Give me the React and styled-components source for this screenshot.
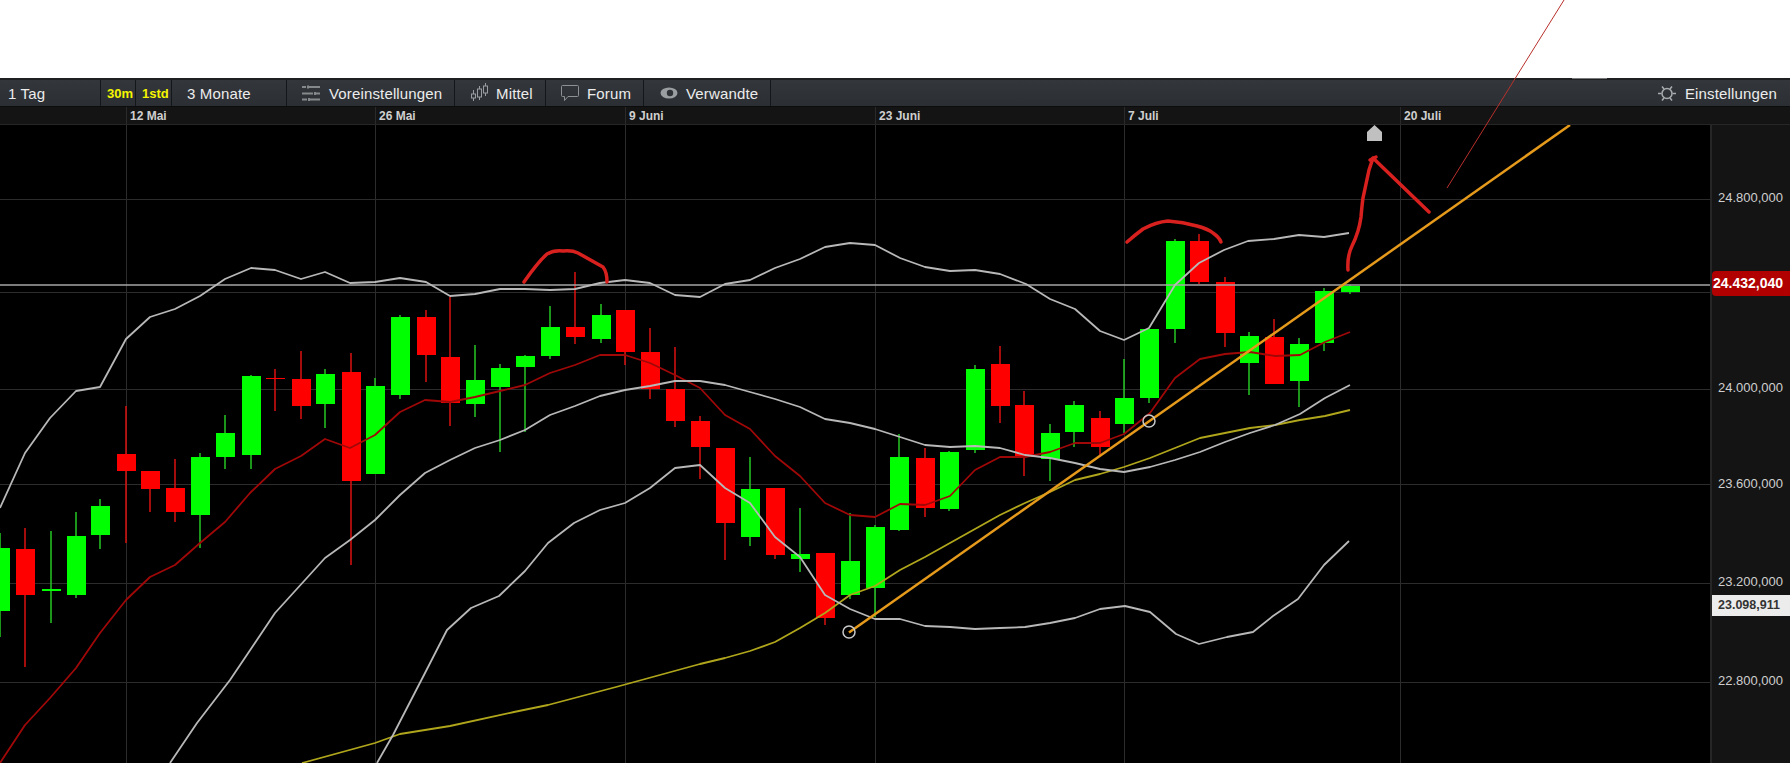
import * as React from 'react'
import styled, { createGlobalStyle } from 'styled-components'

const GlobalStyle = createGlobalStyle`
  html, body {
    margin: 0;
    padding: 0;
    background: #fff;
    overflow: hidden;
  }
`

const Page = styled.div`
  position: relative;
  width: 1790px;
  height: 763px;
  display: flex;
  flex-direction: column;
  font-family: 'Liberation Sans', Arial, sans-serif;
`

const Blank = styled.div`
  height: 78px;
  background: #fff;
`

const Toolbar = styled.div`
  height: 26px;
  display: flex;
  align-items: stretch;
  background: linear-gradient(#33373b, #2b2f33);
  border-top: 2px solid #1d1f21;
  border-bottom: 1px solid #0c0c0c;
  color: #ececec;
  font-size: 15px;
  letter-spacing: 0.15px;
`

const ToolItem = styled.div`
  width: ${p => p.$width}px;
  box-sizing: border-box;
  display: flex;
  align-items: center;
  gap: ${p => p.$gap || 0}px;
  padding-left: ${p => p.$pad}px;
  border-right: 1px solid #14171a;
  white-space: nowrap;
`

const Interval = styled(ToolItem)`
  color: #f5f500;
  font-weight: 700;
  font-size: 13px;
  letter-spacing: 0;
`

const ToolRight = styled.div`
  margin-left: auto;
  display: flex;
  align-items: center;
  gap: 9px;
  padding-right: 13px;
`

const DateRow = styled.div`
  height: 17px;
  display: flex;
  background: #141414;
  border-bottom: 1px solid #262626;
  color: #cfcfcf;
  font-size: 12px;
  font-weight: 700;
  line-height: 19px;
`

const DateCell = styled.div`
  width: ${p => p.$width}px;
  box-sizing: border-box;
  padding-left: 3px;
  border-left: ${p => (p.$first ? '0' : '1px solid #2a2a2a')};
`

const ChartRow = styled.div`
  flex: 1;
  display: flex;
  background: #000;
`

const ChartSvg = styled.svg`
  display: block;
  width: 1710px;
  height: 638px;
`

const PriceAxis = styled.div`
  position: relative;
  width: 80px;
  box-sizing: border-box;
  background: #141414;
  border-left: 2px solid #262626;
  padding-top: 65px;
  color: #cfcfcf;
  font-size: 13px;
`

const Tick = styled.div`
  height: ${p => p.$height}px;
  padding-left: 6px;
  line-height: 16px;
`

const PriceTag = styled.div`
  position: absolute;
  top: ${p => p.$top}px;
  left: 0;
  right: 0;
  height: ${p => p.$height}px;
  line-height: ${p => p.$height}px;
  padding-left: ${p => p.$pad}px;
  font-weight: 700;
  white-space: nowrap;
`

const LastTag = styled(PriceTag)`
  background: #b00000;
  color: #fff;
  font-size: 14px;
  border-radius: 4px 0 0 4px;
`

const LowTag = styled(PriceTag)`
  background: #ececec;
  color: #333;
  font-size: 12.5px;
`

const Annotations = styled.svg`
  position: absolute;
  inset: 0;
  width: 1790px;
  height: 763px;
  pointer-events: none;
`

// x = 25px step, [bodyTop, bodyBottom, wickTop, wickBottom, up]
const candles = [
  [0, 548, 611, 533, 637, 1], [25, 549, 595, 528, 667, 0], [51, 589, 591, 531, 623, 1],
  [76, 536, 595, 512, 598, 1], [100, 506, 535, 499, 549, 1], [126, 454, 471, 406, 543, 0],
  [150, 471, 489, 471, 512, 0], [175, 488, 512, 459, 522, 0], [200, 457, 515, 453, 548, 1],
  [225, 433, 457, 415, 469, 1], [251, 376, 455, 375, 469, 1], [275, 378, 379, 369, 411, 0],
  [301, 379, 406, 351, 419, 0], [325, 374, 404, 369, 428, 1], [351, 372, 481, 353, 565, 0],
  [375, 386, 474, 378, 474, 1], [400, 317, 395, 315, 399, 1], [426, 317, 355, 310, 382, 0],
  [450, 357, 403, 297, 426, 0], [475, 380, 404, 345, 417, 1], [500, 368, 387, 364, 452, 1],
  [525, 356, 367, 355, 432, 1], [550, 327, 356, 306, 359, 1], [575, 327, 337, 272, 344, 0],
  [601, 315, 339, 304, 343, 1], [625, 310, 352, 310, 365, 0], [650, 352, 389, 328, 399, 0],
  [675, 389, 421, 347, 427, 0], [700, 421, 447, 416, 479, 0], [725, 448, 523, 448, 560, 0],
  [750, 489, 537, 457, 546, 1], [775, 488, 555, 488, 559, 0], [800, 554, 559, 508, 572, 1],
  [825, 553, 618, 553, 625, 0], [850, 561, 595, 513, 599, 1], [875, 527, 588, 525, 617, 1],
  [899, 457, 530, 434, 531, 1], [925, 458, 508, 448, 517, 0], [949, 452, 509, 451, 511, 1],
  [975, 369, 450, 365, 453, 1], [1000, 364, 406, 346, 423, 0], [1024, 405, 457, 391, 476, 0],
  [1050, 433, 459, 424, 481, 1], [1074, 405, 432, 401, 447, 1], [1100, 418, 447, 411, 455, 0],
  [1124, 398, 424, 359, 433, 1], [1149, 329, 398, 329, 403, 1], [1175, 241, 329, 239, 343, 1],
  [1199, 241, 282, 234, 284, 0], [1225, 282, 333, 277, 347, 0], [1249, 336, 363, 332, 395, 1],
  [1274, 337, 384, 319, 384, 0], [1299, 344, 381, 338, 407, 1], [1324, 291, 343, 288, 351, 1],
  [1350, 286, 292, 285, 294, 1],
]

const upperBand = '0,508 25,453 50,418 76,391 100,387 126,339 150,317 175,309 200,296 225,279 251,268 275,270 301,279 325,272 350,283 375,282 400,278 426,282 450,296 475,294 500,289 525,289 550,290 575,289 600,283 625,280 650,283 675,295 700,297 725,284 750,280 775,268 800,259 825,247 850,243 875,245 900,258 925,267 950,271 975,270 1000,274 1026,284 1050,299 1075,309 1100,331 1124,340 1149,328 1175,285 1199,263 1224,250 1248,241 1274,239 1299,235 1324,237 1349,233'
const middleBand = '170,763 197,723 230,680 275,613 325,558 350,540 375,520 400,495 425,473 450,460 475,448 500,440 525,430 550,415 575,406 600,396 625,390 650,386 675,381 700,381 725,385 750,392 775,399 800,407 825,419 850,423 875,429 900,437 925,445 950,447 975,446 1000,448 1025,455 1050,458 1075,463 1100,469 1124,472 1150,467 1175,460 1200,452 1225,442 1250,433 1275,425 1300,414 1325,398 1350,385'
const lowerBand = '377,763 393,735 425,673 447,630 471,608 499,596 525,571 548,543 574,523 600,510 625,503 650,488 675,468 700,465 725,488 750,503 775,537 800,557 825,595 850,609 875,619 900,619 925,626 950,627 975,629 1000,628 1025,627 1050,623 1075,618 1100,609 1125,606 1150,612 1176,634 1199,644 1227,637 1253,632 1273,616 1298,599 1324,565 1349,541'
const redAverage = '0,763 25,725 50,698 76,668 100,633 126,600 150,577 175,565 200,543 225,522 250,493 275,469 301,456 325,439 350,448 375,435 400,412 425,400 450,402 475,397 500,391 525,385 550,373 575,365 600,355 625,355 650,363 675,375 700,388 725,415 750,429 775,456 800,476 825,503 850,515 875,517 900,504 925,505 950,496 975,470 1000,457 1025,457 1050,452 1075,443 1100,443 1124,434 1150,413 1175,378 1200,359 1225,354 1250,352 1275,356 1300,355 1325,342 1350,332'
const yellowAverage = '302,763 375,743 400,734 450,726 514,712 548,705 616,687 700,664 725,658 750,651 775,642 800,628 825,613 850,595 875,586 900,570 925,557 950,543 975,529 1000,515 1025,503 1050,492 1075,480 1100,474 1124,467 1150,458 1175,448 1200,438 1225,433 1250,428 1275,425 1300,420 1325,416 1350,410'

const gridX = [126, 375, 625, 875, 1124, 1400]
const gridY = [199, 292, 389, 484, 583, 682]

const dateCells = [
  { width: 126, first: true },
  { width: 249, label: '12 Mai' },
  { width: 250, label: '26 Mai' },
  { width: 250, label: '9 Juni' },
  { width: 249, label: '23 Juni' },
  { width: 276, label: '7 Juli' },
  { width: 390, label: '20 Juli' },
]

const SlidersIcon = () => (
  <svg width="20" height="18" viewBox="0 0 20 18" fill="none" stroke="#85898c" strokeWidth="2">
    <path d="M1 3h4M8 3h11M7 1.500v3" />
    <path d="M1 9.500h11M15 9.500h4M14 8v3" />
    <path d="M1 15.500h5M9 15.500h10M8 14v3" />
  </svg>
)

const CandlesIcon = () => (
  <svg width="19" height="20" viewBox="0 0 19 20" fill="none" stroke="#9a9ea1" strokeWidth="1">
    <path d="M3.500 7v11M9.500 3v14M15.500 0v13" />
    <rect x="1.500" y="11" width="4" height="4" fill="#2f3337" />
    <rect x="7.500" y="6" width="4" height="8" fill="#2f3337" />
    <rect x="13.500" y="3" width="4" height="7" fill="#2f3337" />
  </svg>
)

const BubbleIcon = () => (
  <svg width="18" height="16" viewBox="0 0 18 16" fill="none" stroke="#8d9194" strokeWidth="1">
    <path d="M1.500 .5h15a1 1 0 0 1 1 1v9a1 1 0 0 1-1 1H7l-3.500 4v-4h-2a1 1 0 0 1-1-1v-9a1 1 0 0 1 1-1z" />
  </svg>
)

const EyeIcon = () => (
  <svg width="18" height="12" viewBox="0 0 18 12">
    <ellipse cx="9" cy="6" rx="8.500" ry="5.500" fill="#9a9ea1" />
    <circle cx="10" cy="6" r="3.200" fill="#2f3337" />
  </svg>
)

const GearIcon = () => (
  <svg width="18" height="17" viewBox="0 0 18 17" fill="none" stroke="#a8acae" strokeWidth="1.500">
    <circle cx="9" cy="8.500" r="5" />
    <path d="M0 8.500h3.500M14.500 8.500H18M4 1.500l2 2.500M14 1.500l-2 2.500M4 15.500l2-2.500M14 15.500l-2-2.500" />
  </svg>
)

const Candle = ({ x, bodyTop, bodyBottom, wickTop, wickBottom, up }) => (
  <g>
    <line x1={x} x2={x} y1={wickTop} y2={wickBottom} stroke={up ? '#25c925' : '#dd1010'} strokeWidth="1.500" />
    <rect
      x={x - 9.5}
      y={bodyTop}
      width="19"
      height={bodyBottom - bodyTop}
      fill={up ? '#00ff00' : '#ff0000'}
      shapeRendering="crispEdges"
    />
  </g>
)

const Chart = () => (
  <ChartSvg viewBox="0 125 1710 638">
    {gridX.map(x => (
      <line key={x} x1={x} x2={x} y1="125" y2="763" stroke="#2c2c2c" strokeWidth="1" shapeRendering="crispEdges" />
    ))}
    {gridY.map(y => (
      <line key={y} x1="0" x2="1710" y1={y} y2={y} stroke="#2c2c2c" strokeWidth="1" shapeRendering="crispEdges" />
    ))}
    {candles.map(([x, bodyTop, bodyBottom, wickTop, wickBottom, up]) => (
      <Candle key={x} x={x} bodyTop={bodyTop} bodyBottom={bodyBottom} wickTop={wickTop} wickBottom={wickBottom} up={up} />
    ))}
    <line x1="0" x2="1710" y1="285" y2="285" stroke="#a6a6a6" strokeWidth="1.500" />
    <g fill="none" strokeWidth="1.800" strokeLinejoin="round">
      <polyline points={yellowAverage} stroke="#b0a61c" />
      <polyline points={redAverage} stroke="#a00808" />
      <polyline points={upperBand} stroke="#b8b8b8" />
      <polyline points={middleBand} stroke="#b8b8b8" />
      <polyline points={lowerBand} stroke="#b8b8b8" />
    </g>
    <line x1="849" y1="632.500" x2="1570" y2="125" stroke="#e59a1c" strokeWidth="2.500" />
    <g fill="none" stroke="#c9c9c9" strokeWidth="1.500">
      <circle cx="849" cy="632" r="6" />
      <circle cx="1149" cy="421" r="6" />
    </g>
    <path d="M1367 132l7.500-7 7.500 7v9h-15z" fill="#c0c0c0" />
  </ChartSvg>
)

const App = () => (
  <Page>
    <GlobalStyle />
    <Blank />
    <Toolbar>
      <ToolItem $width={101} $pad={8}>1 Tag</ToolItem>
      <Interval $width={35} $pad={6}>30m</Interval>
      <Interval $width={36} $pad={6}>1std</Interval>
      <ToolItem $width={115} $pad={15}>3 Monate</ToolItem>
      <ToolItem $width={168} $pad={14} $gap={8}><SlidersIcon />Voreinstellungen</ToolItem>
      <ToolItem $width={91} $pad={15} $gap={7}><CandlesIcon />Mittel</ToolItem>
      <ToolItem $width={98} $pad={15} $gap={8}><BubbleIcon />Forum</ToolItem>
      <ToolItem $width={127} $pad={16} $gap={8}><EyeIcon />Verwandte</ToolItem>
      <ToolRight><GearIcon />Einstellungen</ToolRight>
    </Toolbar>
    <DateRow>
      {dateCells.map(cell => (
        <DateCell key={cell.width + (cell.label || '')} $width={cell.width} $first={cell.first}>
          {cell.label}
        </DateCell>
      ))}
    </DateRow>
    <ChartRow>
      <Chart />
      <PriceAxis>
        <Tick $height={190}>24.800,000</Tick>
        <Tick $height={96}>24.000,000</Tick>
        <Tick $height={98}>23.600,000</Tick>
        <Tick $height={99}>23.200,000</Tick>
        <Tick $height={20}>22.800,000</Tick>
        <LastTag $top={146} $height={25} $pad={1}>24.432,040</LastTag>
        <LowTag $top={470} $height={21} $pad={6}>23.098,911</LowTag>
      </PriceAxis>
    </ChartRow>
    <Annotations viewBox="0 0 1790 763">
      <g fill="none" stroke="#d8211f" strokeWidth="3.500" strokeLinecap="round" strokeLinejoin="round">
        <path d="M524 282Q538 262 547 254Q554 250 563 251Q572 250 578 253L603 267Q607 272 607 282" />
        <path d="M1127 242Q1135 235 1143 229Q1156 222 1168 221Q1183 222 1197 226Q1208 229 1213 233Q1219 237 1221 242" />
        <path d="M1348 270Q1347 256 1352 246Q1359 232 1361 217Q1362 205 1363 198Q1366 184 1369 170L1373 158L1429 212" />
        <path d="M1370 160L1376 157" />
      </g>
      <line x1="1447" y1="188" x2="1564" y2="0" stroke="#b8302c" strokeWidth="1" />
      <line x1="1572" y1="78.500" x2="1607" y2="78.500" stroke="#77797b" strokeWidth="1" />
    </Annotations>
  </Page>
)

export default App
